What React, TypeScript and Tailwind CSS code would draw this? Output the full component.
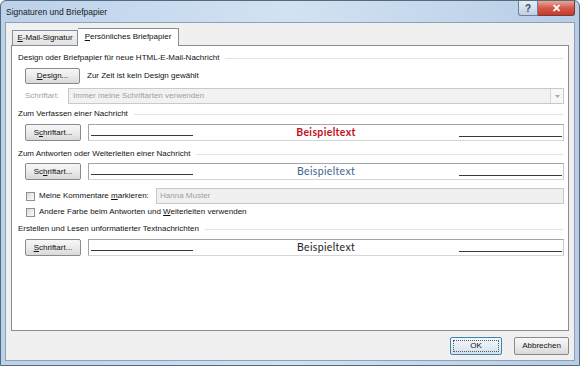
import React from "react";

function Btn({ className = "", children }: { className?: string; children: React.ReactNode }) {
  return (
    <div
      className={`flex h-[16px] shrink-0 items-center justify-center rounded-[2px] border border-[#8a8a8a] bg-gradient-to-b from-[#f7f7f7] via-[#ebebeb] to-[#d9d9d9] text-[#111] ${className}`}
    >
      {children}
    </div>
  );
}

function Header({ text, className = "" }: { text: string; className?: string }) {
  return (
    <div className={`flex h-[12px] items-center gap-[6px] pl-[6px] pr-[5px] ${className}`}>
      <span className="whitespace-nowrap">{text}</span>
      <div className="h-px flex-1 bg-[#e2e2e2]" />
    </div>
  );
}

function Preview({ color, bold }: { color: string; bold?: boolean }) {
  return (
    <div className="flex h-[17px] flex-1 items-end border border-[#a5a5a5] border-b-[#d5d5d5] border-r-[#c8c8c8] bg-white pb-[4px] pl-[2px] pr-px">
      <div className="h-px w-[102px] bg-[#3a3a3a]" />
      <div
        className={`mb-[-2px] flex-1 text-center font-['Lato',sans-serif] text-[10.5px] leading-[11px] tracking-[0.35px] ${color} ${bold ? "font-bold" : ""}`}
      >
        Beispieltext
      </div>
      <div className="mb-[-1px] h-px w-[103px] bg-[#3a3a3a]" />
    </div>
  );
}

function FontRow({ color, bold, mn }: { color: string; bold?: boolean; mn: number }) {
  const word = "Schriftart...";
  return (
    <div className="flex h-[17px] items-stretch gap-[7px] pl-[13px] pr-[4px]">
      <Btn className="h-[17px] w-[56px]">
        {word.slice(0, mn)}
        <span className="underline">{word[mn]}</span>
        {word.slice(mn + 1)}
      </Btn>
      <Preview color={color} bold={bold} />
    </div>
  );
}

function Check() {
  return (
    <div className="h-[9px] w-[9px] shrink-0 border border-[#8f8f8f] bg-gradient-to-br from-[#dcdcdc] to-[#fbfbfb]" />
  );
}

export default function App() {
  return (
    <div className="h-[366px] w-[580px] overflow-hidden bg-white font-['Liberation_Sans',Arial,sans-serif] text-[8px] text-[#111]">
      <div className="flex h-full w-full flex-col rounded-t-[6px] border border-[#55697f] bg-gradient-to-r from-[#bcd2ea] via-[#d3e2f2] to-[#b7cde6]">
        {/* title bar */}
        <div className="flex h-[21px] shrink-0 items-start">
          <div className="pl-[5px] pt-[5px] text-[8.5px] text-[#1a1a1a]">Signaturen und Briefpapier</div>
          <div className="ml-auto mr-[4px] flex">
            <div className="flex h-[15px] w-[20px] items-center justify-center rounded-bl-[3px] border border-t-0 border-[#6d7f94] bg-gradient-to-b from-[#e6eef7] via-[#d3e0ee] to-[#bccfe4] text-[10px] font-bold text-[#39495c]">
              ?
            </div>
            <div className="flex h-[15px] w-[37px] items-center justify-center rounded-br-[3px] border border-l-0 border-t-0 border-[#7a3a32] bg-gradient-to-b from-[#e9a598] via-[#d4584a] to-[#c43a2c] text-[11px] font-bold leading-none text-white">
              ✕
            </div>
          </div>
        </div>

        {/* client area */}
        <div className="mx-[4px] mb-[4px] flex flex-1 flex-col border border-[#8ca0b8] bg-[#f0f0f0]">
          {/* tabs */}
          <div className="flex h-[22px] items-end pl-[6px]">
            <div className="flex h-[15px] w-[66px] items-center justify-center border border-b-0 border-[#898c95] bg-gradient-to-b from-[#f3f3f3] to-[#e2e2e2]">
              <span className="underline">E</span>-Mail-Signatur
            </div>
            <div className="relative z-10 -mb-px flex h-[18px] w-[101px] items-center justify-center border border-b-0 border-l-0 border-[#898c95] bg-white pb-[1px]">
              <span className="underline">P</span>ersönliches Briefpapier
            </div>
          </div>

          {/* panel */}
          <div className="ml-[5px] mr-[5px] flex h-[286px] flex-col border border-[#898c95] bg-white">
            <Header text="Design oder Briefpapier für neue HTML-E-Mail-Nachricht" className="mt-[6px]" />
            <div className="mt-[4px] flex h-[16px] items-center gap-[7px] pl-[13px]">
              <Btn className="w-[55px]">
                <span className="underline">D</span>esign...
              </Btn>
              <span>Zur Zeit ist kein Design gewählt</span>
            </div>
            <div className="mt-[4px] flex h-[16px] items-center pl-[13px] pr-[4px]">
              <span className="w-[43px] text-[#a3a3a3]">Schriftart:</span>
              <div className="flex h-[16px] flex-1 items-center border border-[#c9c9c9] bg-[#f2f2f2] pl-[4px] text-[#a0a0a0]">
                <span className="flex-1">Immer meine Schriftarten verwenden</span>
                <div className="flex h-[14px] w-[13px] items-center justify-center border-l border-[#d6d6d6] bg-[#f7f7f7]">
                  <svg width="5" height="3" viewBox="0 0 5 3">
                    <path d="M0 0h5L2.5 3z" fill="#a8a8a8" />
                  </svg>
                </div>
              </div>
            </div>

            <Header text="Zum Verfassen einer Nachricht" className="mt-[4px]" />
            <div className="mt-[4px]">
              <FontRow color="text-[#c0101e]" bold mn={1} />
            </div>

            <Header text="Zum Antworten oder Weiterleiten einer Nachricht" className="mt-[7px]" />
            <div className="mt-[3px]">
              <FontRow color="text-[#3f6293]" mn={2} />
            </div>

            <div className="mt-[8px] flex h-[16px] items-center pl-[14px] pr-[4px]">
              <Check />
              <span className="ml-[4px] w-[117px] whitespace-nowrap">
                Meine Kommentare <span className="underline">m</span>arkieren:
              </span>
              <div className="flex h-[16px] flex-1 items-center border border-[#c9c9c9] bg-[#f0f0f0] pl-[3px] text-[#a0a0a0]">
                Hanna Muster
              </div>
            </div>
            <div className="mt-[2px] flex h-[12px] items-center pl-[14px]">
              <Check />
              <span className="ml-[4px] whitespace-nowrap">
                Andere Farbe beim Antworten und <span className="underline">W</span>eiterleiten verwenden
              </span>
            </div>

            <Header text="Erstellen und Lesen unformatierter Textnachrichten" className="mt-[5px]" />
            <div className="mt-[4px]">
              <FontRow color="text-[#222222]" mn={0} />
            </div>
          </div>

          {/* footer buttons */}
          <div className="flex flex-1 items-center justify-end gap-[12px] pr-[5px] pt-[1px]">
            <div className="flex h-[18px] w-[52px] items-center justify-center rounded-[2px] border border-[#3c86b4] bg-gradient-to-b from-[#f2f8fc] via-[#e5eef5] to-[#d3dfe9] p-[2px]">
              <div className="flex h-full w-full items-center justify-center border border-dotted border-[#555]">OK</div>
            </div>
            <Btn className="h-[18px] w-[55px]">Abbrechen</Btn>
          </div>
        </div>
      </div>
    </div>
  );
}
